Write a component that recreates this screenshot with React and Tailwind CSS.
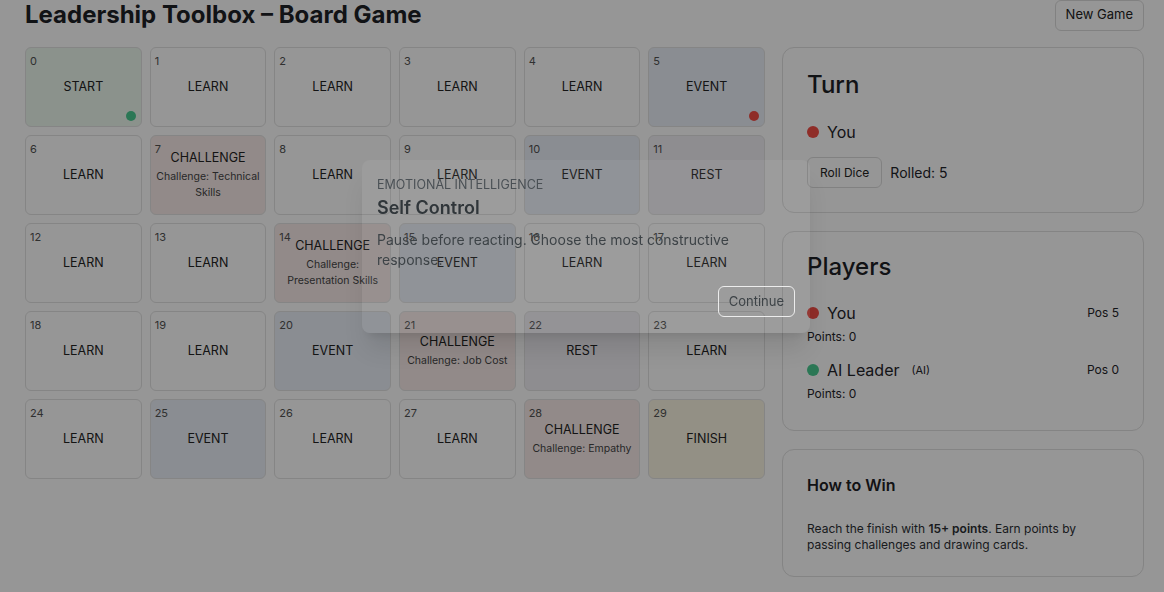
import React from "react";

const tiles = [
  ["START"], ["LEARN"], ["LEARN"], ["LEARN"], ["LEARN"], ["EVENT"],
  ["LEARN"], ["CHALLENGE", "Challenge: Technical Skills"], ["LEARN"], ["LEARN"], ["EVENT"], ["REST"],
  ["LEARN"], ["LEARN"], ["CHALLENGE", "Challenge: Presentation Skills"], ["EVENT"], ["LEARN"], ["LEARN"],
  ["LEARN"], ["LEARN"], ["EVENT"], ["CHALLENGE", "Challenge: Job Cost"], ["REST"], ["LEARN"],
  ["LEARN"], ["EVENT"], ["LEARN"], ["LEARN"], ["CHALLENGE", "Challenge: Empathy"], ["FINISH"],
];

const tileBg = {
  START: "bg-[#e8f3ea]",
  LEARN: "bg-[#fafafa]",
  EVENT: "bg-[#e6ebf3]",
  CHALLENGE: "bg-[#f3e7e4]",
  REST: "bg-[#edebf1]",
  FINISH: "bg-[#f6f0de]",
};

function Tile({ index, kind, note }) {
  return (
    <div className={`relative flex h-20 flex-col items-center justify-center rounded-md border border-[#dedede] px-1 text-center ${tileBg[kind]}`}>
      <span className="absolute left-[4px] top-[5px] text-[11px] leading-4 text-[#505050]">{index}</span>
      <p className="text-[12.5px] leading-[18px] text-[#222]">{kind}</p>
      {note && <p className="mt-[2px] text-[10.5px] leading-4 text-[#444]">{note}</p>}
      {index === 0 && <span className="absolute bottom-[5px] right-[5px] size-2.5 rounded-full bg-[#48c78e]" />}
      {index === 5 && <span className="absolute bottom-[5px] right-[5px] size-2.5 rounded-full bg-[#ee4b44]" />}
    </div>
  );
}

export default function App() {
  return (
    <div className="relative min-h-screen bg-[#fafafa] font-['Inter',sans-serif] text-[#1f2328]">
      <div className="pl-[25px] pr-[20px]">
        <header className="flex h-[30px] items-center justify-between">
          <h1 className="text-[24px] font-bold leading-[30px] text-[#1d2125]">Leadership Toolbox – Board Game</h1>
          <button className="h-[31px] rounded-md border border-[#d8d8d8] px-[10px] text-[13px] text-[#222]">New Game</button>
        </header>

        <div className="mt-[17px] grid grid-cols-[740px_1fr] gap-[17px]">
          <div className="grid grid-cols-6 gap-2 self-start">
            {tiles.map(([kind, note], i) => (
              <Tile key={i} index={i} kind={kind} note={note} />
            ))}
          </div>

          <aside className="flex flex-col gap-[18px]">
            <section className="rounded-xl border border-[#dcdcdc] px-6 pb-[24px] pt-6">
              <h2 className="text-[24px] font-medium leading-[26px] text-[#1d2125]">Turn</h2>
              <div className="mt-[22px] flex items-center gap-2 text-[16px] leading-6">
                <span className="size-3 rounded-full bg-[#ee4b44]" />
                You
              </div>
              <div className="mt-[13px] flex items-center gap-2">
                <button className="h-[31px] rounded-md border border-[#d8d8d8] px-3 text-[12px] text-[#222]">Roll Dice</button>
                <span className="text-[14px]">Rolled: 5</span>
              </div>
            </section>

            <section className="rounded-xl border border-[#dcdcdc] px-6 pb-[28px] pt-[22px]">
              <h2 className="text-[24px] font-medium leading-[26px] text-[#1d2125]">Players</h2>
              <div className="mt-[21px]">
                <div className="flex items-center justify-between">
                  <div className="flex items-center gap-2 text-[16px] leading-6">
                    <span className="size-3 rounded-full bg-[#ee4b44]" />
                    You
                  </div>
                  <span className="text-[12px]">Pos 5</span>
                </div>
                <p className="mt-1 text-[12px] leading-4">Points: 0</p>
              </div>
              <div className="mt-[13px]">
                <div className="flex items-center justify-between">
                  <div className="flex items-center gap-2 text-[16px] leading-6">
                    <span className="size-3 rounded-full bg-[#48c78e]" />
                    AI Leader
                    <span className="ml-1 text-[11px]">(AI)</span>
                  </div>
                  <span className="text-[12px]">Pos 0</span>
                </div>
                <p className="mt-1 text-[12px] leading-4">Points: 0</p>
              </div>
            </section>

            <section className="rounded-xl border border-[#dcdcdc] px-6 pb-[23px] pt-[25px]">
              <h3 className="text-[16px] font-semibold leading-5 text-[#1d2125]">How to Win</h3>
              <p className="mt-[26px] text-[12px] leading-4 text-[#2a2e33]">
                Reach the finish with <b className="font-semibold">15+ points</b>. Earn points by passing challenges and drawing cards.
              </p>
            </section>
          </aside>
        </div>
      </div>

      <div className="fixed inset-0 bg-black/40" />

      <div className="absolute left-[362px] top-[160px] w-[448px] rounded-lg bg-white/[0.06] px-[15px] py-4 shadow-xl">
        <p className="text-[12.5px] uppercase leading-[18px] text-[#4a5055]">Emotional Intelligence</p>
        <h2 className="mt-[2px] text-[18px] font-semibold leading-6 text-[#30363a]">Self Control</h2>
        <p className="mt-[10px] max-w-[400px] text-[14px] leading-5 text-[#3d4347]">
          Pause before reacting. Choose the most constructive response.
        </p>
        <div className="mt-[16px] flex justify-end">
          <button className="h-[31px] rounded-md border border-[#ececec] px-[10px] text-[13px] text-[#3d4347]">Continue</button>
        </div>
      </div>
    </div>
  );
}
